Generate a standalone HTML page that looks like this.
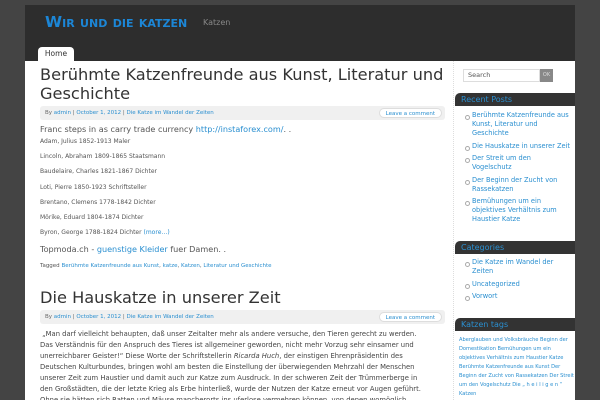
<!DOCTYPE html>
<html><head><meta charset="utf-8"><style>
*{margin:0;padding:0;box-sizing:border-box}
html,body{overflow:hidden}
body{width:600px;height:400px;background:#444;font-family:"DejaVu Sans",sans-serif;position:relative}
a{color:#2a8fd0;text-decoration:none}
#hdr{position:absolute;left:25px;top:5px;width:550px;height:56px;background:#2d2d2d}
#logo{position:absolute;left:20px;top:8px;font:bold 15.5px "DejaVu Sans",sans-serif;color:#1c86d6;font-variant:small-caps;white-space:nowrap}
#desc{position:absolute;left:178px;top:13px;font-size:8px;color:#888}
#tab{position:absolute;left:13px;top:42px;width:36px;height:14px;background:#fff;border-radius:4px 4px 0 0;font-size:7.5px;color:#333;text-align:center;line-height:14px}
#main{position:absolute;left:25px;top:61px;width:550px;height:339px;background:#fff;overflow:hidden}
#content{position:absolute;left:15px;top:0;width:405px}
h2{font-weight:normal;font-size:16.2px;color:#333;line-height:19px;margin-top:4px}
.meta{position:relative;height:14px;margin:3px 0 3px 0;background:#f0f0f0;border-radius:3px;font-size:5.5px;color:#666;line-height:14px;padding-left:5px}
.meta .lc{position:absolute;right:3px;top:2px;height:10px;line-height:10px;background:#fff;border-radius:5px;padding:0 6px;border:1px solid #ddd}
.big{font-size:8.1px;color:#555;line-height:12px}
.sm{font-size:6px;color:#555;line-height:15.2px}
.tag{font-size:5.5px;color:#555;margin-top:8px}
.p2{font-size:6.8px;color:#444;line-height:11px;width:390px;margin-top:5px}
#side{position:absolute;left:428px;top:0;width:122px;height:339px;border-left:1px dotted #ddd}
#search{position:absolute;left:9px;top:8px;width:77px;height:13px;border:1px solid #ddd;font-size:6.5px;color:#555;line-height:11px;padding-left:4px}
#ok{position:absolute;left:86px;top:8px;width:13px;height:13px;background:#888;color:#ddd;font-size:5px;text-align:center;line-height:13px}
.wt{position:absolute;left:1px;width:121px;height:13px;background:#333;border-radius:5px 0 0 0;color:#2a8fd0;font-size:8px;line-height:13px;padding-left:6px}
.wl{position:absolute;left:10px;font-size:6.6px;line-height:9px;list-style:none;width:112px}
.wl li{padding-left:8px;position:relative;margin-bottom:3.5px}
.wl li:before{content:"";position:absolute;left:1px;top:4px;width:3px;height:3px;border:1px solid #aaa;border-radius:50%}
.tags{position:absolute;left:5px;width:116px;font-size:5.1px;line-height:9px;color:#2a8fd0}
</style></head><body>
<div id="hdr"><div id="logo">Wir und die katzen</div><div id="desc">Katzen</div><div id="tab">Home</div></div>
<div id="main">
<div id="content">
<h2>Berühmte Katzenfreunde aus Kunst, Literatur und Geschichte</h2>
<div class="meta">By <a>admin</a> | <a>October 1, 2012</a> | <a>Die Katze im Wandel der Zeiten</a><span class="lc"><a>Leave a comment</a></span></div>
<div class="big">Franc steps in as carry trade currency <a>http://instaforex.com/</a>. .</div>
<div class="sm" style="margin-top:-1px">Adam, Julius 1852-1913 Maler<br>Lincoln, Abraham 1809-1865 Staatsmann<br>Baudelaire, Charles 1821-1867 Dichter<br>Loti, Pierre 1850-1923 Schriftsteller<br>Brentano, Clemens 1778-1842 Dichter<br>Mörike, Eduard 1804-1874 Dichter<br>Byron, George 1788-1824 Dichter <a>(more…)</a></div>
<div class="big" style="margin-top:3px">Topmoda.ch - <a>guenstige Kleider</a> fuer Damen. .</div>
<div class="tag">Tagged <a>Berühmte Katzenfreunde aus Kunst</a>, <a>katze</a>, <a>Katzen</a>, <a>Literatur und Geschichte</a></div>
<h2 style="margin-top:19px">Die Hauskatze in unserer Zeit</h2>
<div class="meta" style="margin-top:3px">By <a>admin</a> | <a>October 1, 2012</a> | <a>Die Katze im Wandel der Zeiten</a><span class="lc"><a>Leave a comment</a></span></div>
<div class="p2">&nbsp;„Man darf vielleicht behaupten, daß unser Zeitalter mehr als andere versuche, den Tieren gerecht zu werden. Das Verständnis für den Anspruch des Tieres ist allgemeiner geworden, nicht mehr Vorzug sehr einsamer und unerreichbarer Geister!“ Diese Worte der Schriftstellerin <i>Ricarda Huch</i>, der einstigen Ehrenpräsidentin des Deutschen Kulturbundes, bringen wohl am besten die Einstellung der überwiegenden Mehrzahl der Menschen unserer Zeit zum Haustier und damit auch zur Katze zum Ausdruck. In der schweren Zeit der Trümmerberge in den Großstädten, die der letzte Krieg als Erbe hinterließ, wurde der Nutzen der Katze erneut vor Augen geführt. Ohne sie hätten sich Ratten und Mäuse mancherorts ins uferlose vermehren können, von denen womöglich</div>
</div>
<div id="side">
<div id="search">Search</div><div id="ok">OK</div>
<div class="wt" style="top:32px">Recent Posts</div>
<ul class="wl" style="top:50px"><li><a>Berühmte Katzenfreunde aus<br>Kunst, Literatur und<br>Geschichte</a></li><li><a>Die Hauskatze in unserer Zeit</a></li><li><a>Der Streit um den<br>Vogelschutz</a></li><li><a>Der Beginn der Zucht von<br>Rassekatzen</a></li><li><a>Bemühungen um ein<br>objektives Verhältnis zum<br>Haustier Katze</a></li></ul>
<div class="wt" style="top:180px">Categories</div>
<ul class="wl" style="top:197px"><li><a>Die Katze im Wandel der<br>Zeiten</a></li><li><a>Uncategorized</a></li><li><a>Vorwort</a></li></ul>
<div class="wt" style="top:257px">Katzen tags</div>
<div class="tags" style="top:275px">Aberglauben und Volksbräuche Beginn der Domestikation Bemühungen um ein objektives Verhältnis zum Haustier Katze Berühmte Katzenfreunde aus Kunst Der Beginn der Zucht von Rassekatzen Der Streit um den Vogelschutz Die „ h e i l i g e n “ Katzen</div>
</div>
</div>
</body></html>
